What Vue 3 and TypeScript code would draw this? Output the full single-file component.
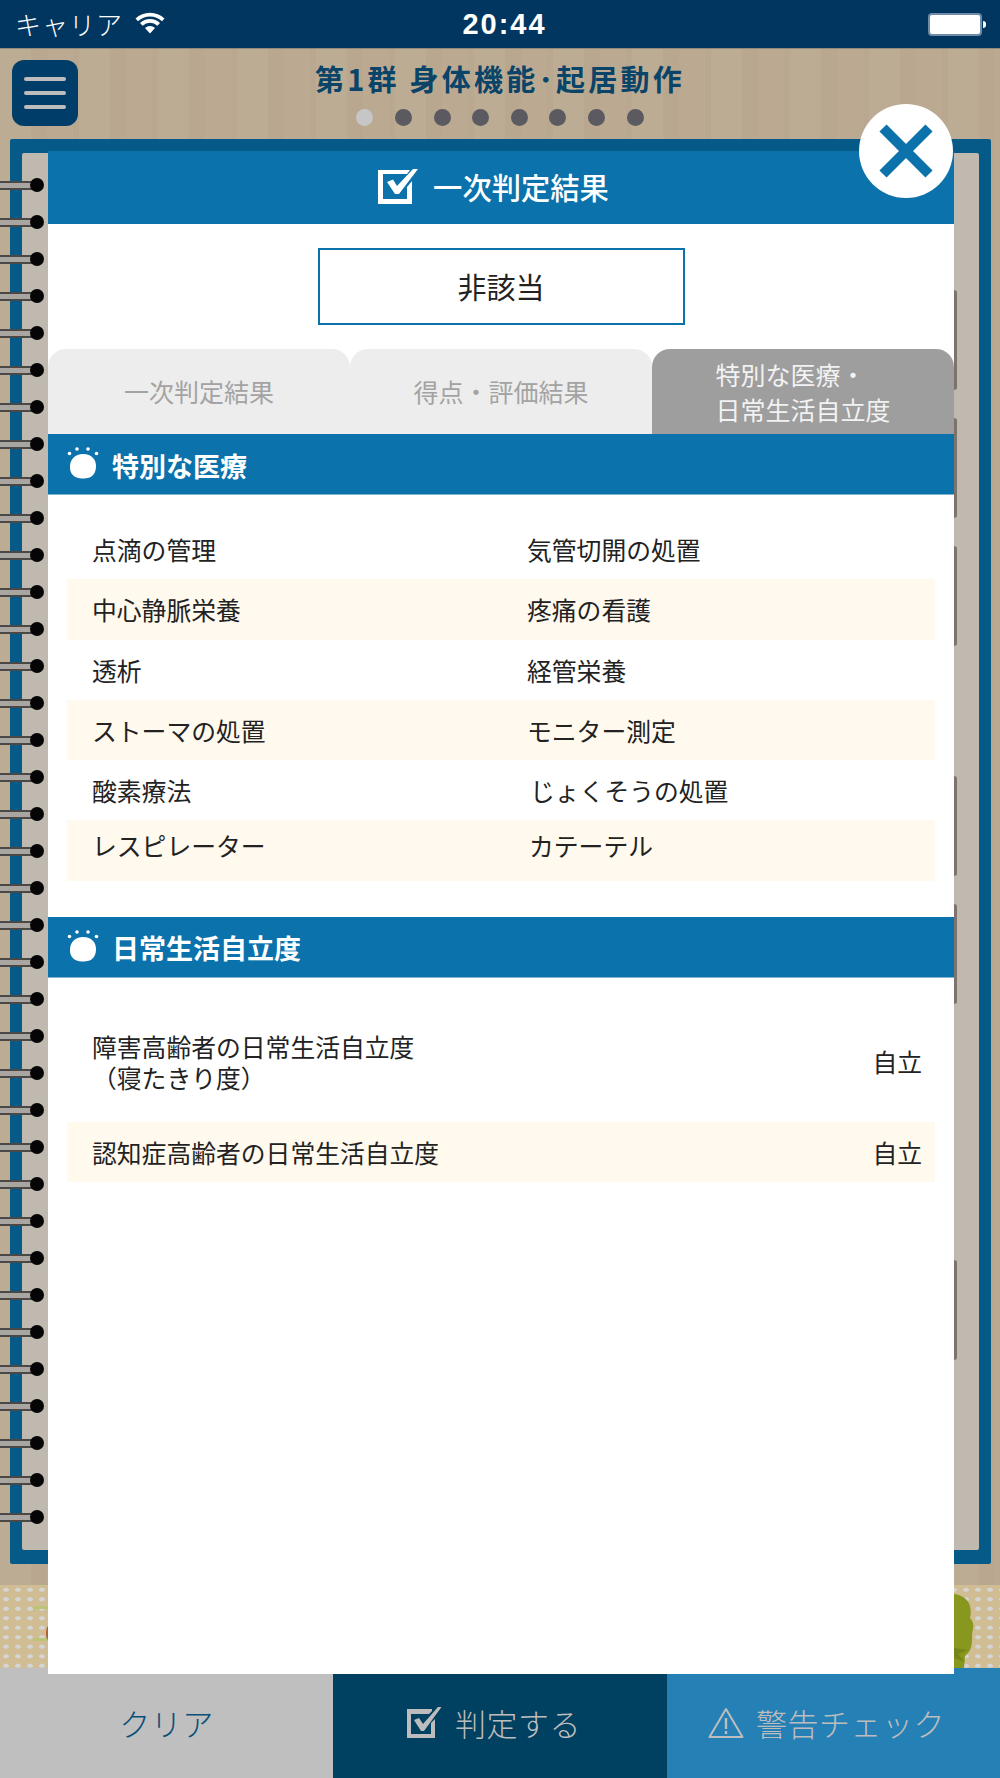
<template>
  <div class="screen">
    <div class="status-bar">
      <span class="carrier">キャリア</span>
      <svg class="wifi" width="30" height="22" viewBox="0 0 30 22">
        <path d="M0.5 6.5 A21 21 0 0 1 29.5 6.5 L27 9.2 A17.5 17.5 0 0 0 3 9.2 Z" fill="#fff" />
        <path d="M5 11 A14.5 14.5 0 0 1 25 11 L22.4 13.7 A11 11 0 0 0 7.6 13.7 Z" fill="#fff" />
        <path d="M10 16 A7.5 7.5 0 0 1 20 16 L15 21.5 Z" fill="#fff" />
      </svg>
      <span class="clock">20:44</span>
      <div class="battery">
        <div class="battery-body"></div>
        <div class="battery-tip"></div>
      </div>
    </div>

    <div class="desk">
      <header class="top-head">
        <button class="menu-btn">
          <span></span><span></span><span></span>
        </button>
        <div class="top-title">第1群 身体機能･起居動作</div>
        <div class="pager">
          <i v-for="n in 8" :key="n" :class="{ on: n === 1 }"></i>
        </div>
      </header>

      <div class="notebook">
        <div class="page">
          <div class="side-tabs">
            <div v-for="t in sideTabs" :key="t" class="side-tab" :style="{ top: t + 'px' }"></div>
          </div>
        </div>
        <div class="rings">
          <div v-for="n in 37" :key="n" class="ring"></div>
        </div>
      </div>

      <div class="deco">
        <i class="leaf leaf-a"></i>
        <i class="leaf leaf-b"></i>
        <i class="berry"></i>
        <svg class="tree" width="30" height="74" viewBox="0 0 30 74">
          <path d="M0 0 C8 1 14 5 16 12 C17 17 17 20 16 24 C19 27 20 31 19 35 C18 38 18 42 18 46 C18 54 15 59 11 62 L10 74 H0 Z" fill="#88981f" />
          <path d="M0 54 L14 56 L4 60 L11 68 L0 64 Z" fill="#758519" />
        </svg>
      </div>
    </div>

    <div class="bottom-bar">
      <div class="bottom-btn clear">クリア</div>
      <div class="bottom-btn judge">
        <svg width="38" height="34" viewBox="0 0 38 34">
          <path d="M2 3 H27 V5 L24 8 H6 V28 H26 V17 L30 13 V32 H2 Z" fill="#bdbdbd" />
          <path d="M9 14 L14 12 L18 18 L33 1 L36.500 1 L19 25 H16 Z" fill="#bdbdbd" />
        </svg>
        判定する
      </div>
      <div class="bottom-btn warn">
        <svg width="36" height="32" viewBox="0 0 36 32">
          <path d="M18 2 L34.500 30 H1.500 Z" fill="none" stroke="#bdbdbd" stroke-width="2" stroke-linejoin="round" />
          <rect x="16.800" y="11" width="2.400" height="11" fill="#bdbdbd" />
          <rect x="16.800" y="24" width="2.400" height="3" fill="#bdbdbd" />
        </svg>
        警告チェック
      </div>
    </div>

    <!-- 判定結果モーダル -->
    <div class="modal">
      <div class="modal-head">
        <svg width="42" height="36" viewBox="0 0 42 36">
          <path d="M1 2 H33 L30 6 H6 V31 H30 V19 L35 13 V36 H1 Z" fill="#fff" />
          <path d="M10 14 L16 11.500 L20 18 L36 1 H41 L22 26 H18 Z" fill="#fff" />
        </svg>
        <span>一次判定結果</span>
      </div>
      <div class="result-wrap">
        <div class="result-box">非該当</div>
      </div>

      <div class="tabs">
        <div v-for="(tab, i) in tabs" :key="i" class="tab" :class="{ active: i === 2 }">
          <div class="tab-label">
            <div v-for="line in tab" :key="line">{{ line }}</div>
          </div>
        </div>
      </div>

      <div class="sec-head">
        <svg width="32" height="34" viewBox="0 0 32 34">
          <path d="M16 8 C25 8 29.500 14 29 21 C28.500 29 24 33 15 32.500 C7 32 2.500 28 3 20 C3.500 13 8 8 16 8 Z" fill="#fff" />
          <circle cx="2.500" cy="7.500" r="1.800" fill="#fff" />
          <circle cx="10" cy="3" r="1.800" fill="#fff" />
          <circle cx="21" cy="3" r="1.800" fill="#fff" />
          <circle cx="29.500" cy="7.500" r="1.800" fill="#fff" />
        </svg>
        特別な医療
      </div>
      <div class="med-list">
        <div v-for="(row, i) in medical" :key="i" class="row two">
          <span>{{ row[0] }}</span>
          <span>{{ row[1] }}</span>
        </div>
      </div>

      <div class="sec-head">
        <svg width="32" height="34" viewBox="0 0 32 34">
          <path d="M16 8 C25 8 29.500 14 29 21 C28.500 29 24 33 15 32.500 C7 32 2.500 28 3 20 C3.500 13 8 8 16 8 Z" fill="#fff" />
          <circle cx="2.500" cy="7.500" r="1.800" fill="#fff" />
          <circle cx="10" cy="3" r="1.800" fill="#fff" />
          <circle cx="21" cy="3" r="1.800" fill="#fff" />
          <circle cx="29.500" cy="7.500" r="1.800" fill="#fff" />
        </svg>
        日常生活自立度
      </div>
      <div class="life-list">
        <div class="row life tall">
          <span class="two-line">
            <span>障害高齢者の日常生活自立度</span>
            <span>（寝たきり度）</span>
          </span>
          <span>自立</span>
        </div>
        <div class="row life">
          <span>認知症高齢者の日常生活自立度</span>
          <span>自立</span>
        </div>
      </div>

      <button class="close-btn">
        <svg width="56" height="56" viewBox="0 0 56 56">
          <path d="M5 5 L51 51 M51 5 L5 51" stroke="#0b72ab" stroke-width="10" fill="none" />
        </svg>
      </button>
    </div>
  </div>
</template>

<script setup lang="ts">
const sideTabs: number[] = [137, 265, 393, 623, 751, 1107]

const tabs: string[][] = [
  ['一次判定結果'],
  ['得点・評価結果'],
  ['特別な医療・', '日常生活自立度'],
]

const medical: string[][] = [
  ['点滴の管理', '気管切開の処置'],
  ['中心静脈栄養', '疼痛の看護'],
  ['透析', '経管栄養'],
  ['ストーマの処置', 'モニター測定'],
  ['酸素療法', 'じょくそうの処置'],
  ['レスピレーター', 'カテーテル'],
]
</script>

<style>
html,
body {
  margin: 0;
  background: #b9a78e;
}
</style>

<style scoped>
.screen {
  position: relative;
  width: 1000px;
  height: 1778px;
  overflow: hidden;
  display: flex;
  flex-direction: column;
  font-family: "Noto Sans CJK JP", "Noto Sans", sans-serif;
  color: #1a1a1a;
}

/* ステータスバー */
.status-bar {
  position: relative;
  flex: 0 0 48px;
  display: flex;
  align-items: center;
  padding: 0 14px 0 15px;
  background: #003660;
  color: #fff;
  box-sizing: border-box;
}

.carrier {
  font-size: 26px;
  font-weight: 300;
  letter-spacing: 1px;
  line-height: 48px;
}

.wifi {
  margin-left: 12px;
  margin-bottom: 3px;
}

.clock {
  position: absolute;
  left: 0;
  right: 0;
  padding-left: 9px;
  text-align: center;
  font-family: "Liberation Sans", sans-serif;
  font-size: 29px;
  font-weight: 700;
  letter-spacing: 2px;
}

.battery {
  margin-left: auto;
  display: flex;
  align-items: center;
}

.battery-body {
  width: 50px;
  height: 19px;
  background: #fff;
  border: 2px solid #6f8ba5;
  border-radius: 4px;
  margin-right: 1px;
}

.battery-tip {
  width: 3px;
  height: 7px;
  background: #fff;
  border-radius: 0 3px 3px 0;
}

/* 背景 */
.desk {
  flex: 1;
  display: flex;
  flex-direction: column;
  background-color: #bbaa91;
  background-image:
    repeating-linear-gradient(90deg, rgba(255, 255, 255, 0.025) 0 31px, rgba(90, 70, 40, 0.025) 31px 47px, rgba(255, 255, 255, 0) 47px 73px, rgba(90, 70, 40, 0.02) 73px 79px);
  border-top: 1px solid #93897a;
}

.top-head {
  position: relative;
  flex: 0 0 90px;
}

.menu-btn {
  position: absolute;
  left: 12px;
  top: 11px;
  width: 66px;
  height: 66px;
  padding: 0;
  border: none;
  border-radius: 12px;
  background: #003e69;
  display: flex;
  flex-direction: column;
  align-items: center;
  justify-content: center;
  gap: 10px;
}

.menu-btn span {
  display: block;
  width: 42px;
  height: 4px;
  border-radius: 2px;
  background: #bdbdbd;
}

.top-title {
  padding-top: 7px;
  text-align: center;
  font-size: 29px;
  font-weight: 700;
  line-height: 44px;
  letter-spacing: 3.200px;
  color: #0a4468;
}

.pager {
  display: flex;
  justify-content: center;
  gap: 21.600px;
  margin-top: 9px;
}

.pager i {
  width: 17px;
  height: 17px;
  border-radius: 50%;
  background: #5b5a60;
}

.pager i.on {
  background: #c6c6c6;
}

.notebook {
  position: relative;
  flex: 0 0 1425px;
  margin: 0 9px 0 10px;
  box-sizing: border-box;
  padding: 14px 12px;
  background: #055a88;
  border-radius: 2px;
}

.page {
  position: relative;
  height: 100%;
  background: #bfb9b0;
  border-radius: 2px;
}

.side-tab {
  position: absolute;
  left: 932px;
  width: 3px;
  height: 100px;
  border-radius: 0 3px 3px 0;
  background: #7c736c;
}

.rings {
  position: absolute;
  left: -10px;
  top: 39px;
  display: flex;
  flex-direction: column;
  gap: 22px;
}

.ring {
  position: relative;
  width: 44px;
  height: 15px;
}

.ring::before {
  content: "";
  position: absolute;
  left: 0;
  right: 8px;
  top: 2.500px;
  height: 9px;
  box-sizing: border-box;
  border-top: 2.500px solid #4a4747;
  border-bottom: 2.500px solid #4a4747;
  background: #a9a6a2;
}

.ring::after {
  content: "";
  position: absolute;
  right: 0;
  top: 0;
  width: 14px;
  height: 14px;
  border-radius: 50%;
  background: #050505;
}

.deco {
  position: relative;
  flex: 1;
  margin-top: 21px;
  background-color: #d0bd93;
  background-image: radial-gradient(ellipse 3px 2px, #d3d4d3 90%, rgba(211, 212, 211, 0) 100%);
  background-size: 12px 9.500px;
  overflow: hidden;
}

.leaf {
  position: absolute;
  left: 33px;
  width: 15px;
  height: 3px;
  background: #bcc476;
}

.leaf-a {
  top: 21px;
}

.leaf-b {
  top: 53px;
}

.berry {
  position: absolute;
  left: 46px;
  top: 41px;
  width: 5px;
  height: 14px;
  border-radius: 50%;
  background: #b5602e;
}

.tree {
  position: absolute;
  left: 954px;
  top: 9px;
}

/* 下部ボタン */
.bottom-bar {
  flex: 0 0 110px;
  display: grid;
  grid-template-columns: 333px 334px 333px;
}

.bottom-btn {
  display: flex;
  align-items: center;
  justify-content: center;
  gap: 12px;
  font-size: 31px;
  font-weight: 300;
  letter-spacing: 0.500px;
  padding-bottom: 1px;
  box-sizing: border-box;
}

.clear {
  background: #bfbfbf;
  color: #0a5078;
}

.judge {
  background: #004060;
  color: #bdbdbd;
  padding-right: 14px;
}

.warn {
  background: #2580b6;
  color: #bdbdbd;
  padding-right: 14px;
}

/* モーダル */
.modal {
  position: absolute;
  left: 48px;
  top: 151px;
  width: 906px;
  height: 1523px;
  background: #fff;
}

.modal-head {
  height: 73px;
  box-sizing: border-box;
  background: #0b72ab;
  color: #fff;
  display: flex;
  align-items: center;
  justify-content: center;
  gap: 14px;
  padding: 0 16px 3px 0;
  font-size: 29.300px;
  font-weight: 500;
}

.result-wrap {
  display: flex;
  justify-content: center;
  padding: 24px 0 24px;
}

.result-box {
  width: 367px;
  height: 77px;
  box-sizing: border-box;
  border: 2px solid #0b72ab;
  padding-bottom: 2px;
  display: flex;
  align-items: center;
  justify-content: center;
  font-size: 29px;
  color: #222;
}

.tabs {
  display: grid;
  grid-template-columns: repeat(3, 1fr);
  height: 85px;
}

.tab {
  display: flex;
  align-items: center;
  justify-content: center;
  background: #ededed;
  color: #a3a3a3;
  font-size: 25px;
  line-height: 35px;
  border-radius: 18px 18px 0 0;
}

.tab.active {
  background: #9e9e9e;
  color: #f2f2f2;
}

.sec-head {
  height: 61px;
  box-sizing: border-box;
  padding: 2px 0 0 19px;
  background: #0b72ab;
  border-bottom: 1px solid #7fb4d3;
  color: #fff;
  display: flex;
  align-items: center;
  gap: 13px;
  font-size: 27px;
  font-weight: 700;
}

.sec-head svg {
  margin-top: -4px;
}

.med-list {
  padding: 24px 19px 36px;
}

.life-list {
  padding: 22px 19px 0;
}

.row {
  display: flex;
  align-items: center;
  height: 60.300px;
  padding-left: 25px;
  font-size: 24.800px;
  color: #222;
}

.row:nth-child(even) {
  background: #fff9ee;
}

.row.two span {
  flex: 0 0 435px;
}

/* 右列の開始位置が行ごとに少しずれている */
.row.two:nth-child(5) span + span {
  padding-left: 3px;
}

.row.two:nth-child(6) span + span {
  padding-left: 2px;
}

.row.two:nth-child(6) {
  padding-bottom: 11px;
  box-sizing: border-box;
}

.row.life {
  justify-content: space-between;
  padding-right: 13px;
}

.row.tall {
  height: 122px;
}

.two-line {
  padding-top: 2px;
  line-height: 31px;
}

.two-line span {
  display: block;
}

.close-btn {
  position: absolute;
  left: 811px;
  top: -47px;
  width: 94px;
  height: 94px;
  padding: 0;
  border: none;
  border-radius: 50%;
  background: #fff;
  display: flex;
  align-items: center;
  justify-content: center;
}
</style>
